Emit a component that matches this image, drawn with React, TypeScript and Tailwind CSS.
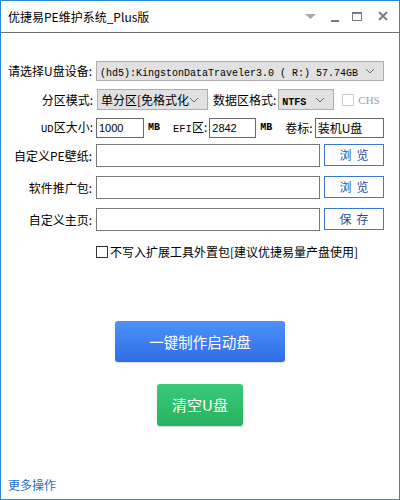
import React from "react";

const Chevron = () => (
  <svg width="10" height="6" viewBox="0 0 10 6" className="shrink-0">
    <path d="M1 1 L5 5 L9 1" fill="none" stroke="#6b6b6b" strokeWidth="1" />
  </svg>
);

function Select({ w, h, children, className = "" }: { w: string; h: string; children: React.ReactNode; className?: string }) {
  return (
    <div className={`${w} ${h} border border-[#adadad] bg-[#e1e1e1] flex items-center pl-[3px] pr-[8px] overflow-hidden ${className}`}>
      <div className="flex-1 overflow-hidden whitespace-nowrap">{children}</div>
      <Chevron />
    </div>
  );
}

function Btn({ children }: { children: React.ReactNode }) {
  return (
    <div className="w-[60px] h-[22px] border border-[#3b78d0] bg-white flex items-center justify-center text-[#1f4f9a] text-[12px] leading-[14px] tracking-[5px] pl-[5px]">
      {children}
    </div>
  );
}

export default function App() {
  const font = "font-['Noto_Sans_CJK_SC',sans-serif]";
  return (
    <div className={`w-[400px] h-[500px] border border-[#2b88d8] bg-white flex flex-col text-black text-[12px] ${font}`}>
      {/* Title bar */}
      <div className="h-[31px] flex items-center pl-[7px] pr-[8px]">
        <div className="text-[12px] leading-[14px]">优捷易PE维护系统_Plus版</div>
        <div className="flex-1" />
        <svg width="92" height="31" viewBox="0 0 92 31">
          <path d="M6 13 L17 13 L11.5 18 Z" fill="#a9a9a9" />
          <rect x="32" y="19" width="8" height="2" fill="#7a7a7a" />
          <rect x="53.5" y="11.5" width="9" height="8" fill="none" stroke="#7a7a7a" strokeWidth="1" />
          <rect x="53" y="11" width="10" height="2" fill="#7a7a7a" />
          <path d="M80 11 L88 19 M88 11 L80 19" stroke="#7a7a7a" strokeWidth="1.8" />
        </svg>
      </div>
      <div className="h-px bg-[#6f6f6f]" />

      {/* Body */}
      <div className="flex-1 flex flex-col">
        {/* Row 1 */}
        <div className="flex items-center mt-[28px] h-[20px]">
          <div className="w-[91px] text-right leading-[14px]">请选择U盘设备:</div>
          <Select w="w-[288px]" h="h-[20px]" className="ml-[4px]">
            <span className="font-['Liberation_Mono',monospace] text-[10px] leading-[12px]">(hd5):KingstonDataTraveler3.0 ( R:) 57.74GB</span>
          </Select>
        </div>

        {/* Row 2 */}
        <div className="flex items-center mt-[8px] h-[21px]">
          <div className="w-[92px] text-right leading-[14px]">分区模式:</div>
          <Select w="w-[111px]" h="h-[21px]" className="ml-[4px]">
            <span className="leading-[14px]">单分区[免格式化</span>
          </Select>
          <div className="ml-[5px] leading-[14px]">数据区格式:</div>
          <Select w="w-[56px]" h="h-[21px]" className="ml-[2px]">
            <span className="font-['Liberation_Mono',monospace] font-bold text-[10px] leading-[12px]">NTFS</span>
          </Select>
          <div className="ml-[8px] w-[12px] h-[12px] border border-[#cfcfcf] bg-white" />
          <div className="ml-[4px] font-['Liberation_Serif',serif] text-[11px] text-[#a0a0a0] leading-[12px]">CHS</div>
        </div>

        {/* Row 3 */}
        <div className="flex items-center mt-[8px] h-[20px]">
          <div className="w-[92px] text-right leading-[14px]">
            <span className="font-['Liberation_Mono',monospace] text-[10.5px]">UD</span>区大小:
          </div>
          <div className="ml-[3px] w-[48px] h-[20px] border border-[#6a6a6a] flex items-center pl-[2px] font-['Liberation_Sans',sans-serif] text-[11px]">1000</div>
          <div className="ml-[4px] font-['Liberation_Mono',monospace] font-bold text-[10px] leading-[12px]">MB</div>
          <div className="ml-[13px] leading-[14px]">
            <span className="font-['Liberation_Mono',monospace] text-[10.5px]">EFI</span>区:
          </div>
          <div className="ml-[2px] w-[47px] h-[20px] border border-[#6a6a6a] flex items-center pl-[2px] font-['Liberation_Sans',sans-serif] text-[11px]">2842</div>
          <div className="ml-[4px] font-['Liberation_Mono',monospace] font-bold text-[10px] leading-[12px]">MB</div>
          <div className="ml-[13px] leading-[14px]">卷标:</div>
          <div className="ml-[2px] w-[69px] h-[20px] border border-[#6a6a6a] flex items-center pl-[2px] leading-[14px]">装机U盘</div>
        </div>

        {/* Rows 4-6 */}
        {[
          { label: "自定义PE壁纸:", btn: "浏览", mt: "mt-[6px]" },
          { label: "软件推广包:", btn: "浏览", mt: "mt-[9px]" },
          { label: "自定义主页:", btn: "保存", mt: "mt-[9px]" },
        ].map((r) => (
          <div key={r.label} className={`flex items-start ${r.mt} h-[23px]`}>
            <div className="w-[91px] h-[23px] flex items-center justify-end leading-[14px]">{r.label}</div>
            <div className="ml-[4px] w-[224px] h-[23px] border border-[#7a7a7a] bg-white" />
            <div className="ml-[4px]">
              <Btn>{r.btn}</Btn>
            </div>
          </div>
        ))}

        {/* Checkbox row */}
        <div className="flex items-center mt-[14px] h-[13px]">
          <div className="ml-[95px] w-[12px] h-[12px] border border-[#333333] bg-white" />
          <div className="ml-[2px] leading-[14px]">不写入扩展工具外置包[建议优捷易量产盘使用]</div>
        </div>

        {/* Big buttons */}
        <div className="flex flex-col items-center mt-[63px]">
          <div className="w-[170px] h-[41px] rounded-[3px] bg-gradient-to-b from-[#4e92f8] to-[#2f6de6] flex items-center justify-center text-white text-[14.5px] leading-[18px] shadow-[0_1px_1px_rgba(0,0,0,0.15)]">
            一键制作启动盘
          </div>
          <div className="mt-[22px] w-[86px] h-[42px] rounded-[3px] bg-gradient-to-b from-[#38c979] to-[#27b35f] flex items-center justify-center text-white text-[15px] leading-[18px] shadow-[0_1px_1px_rgba(0,0,0,0.15)]">
            清空U盘
          </div>
        </div>

        <div className="mt-auto mb-[6px] ml-[7px] text-[#1c6fc8] leading-[16px]">更多操作</div>
      </div>
    </div>
  );
}
